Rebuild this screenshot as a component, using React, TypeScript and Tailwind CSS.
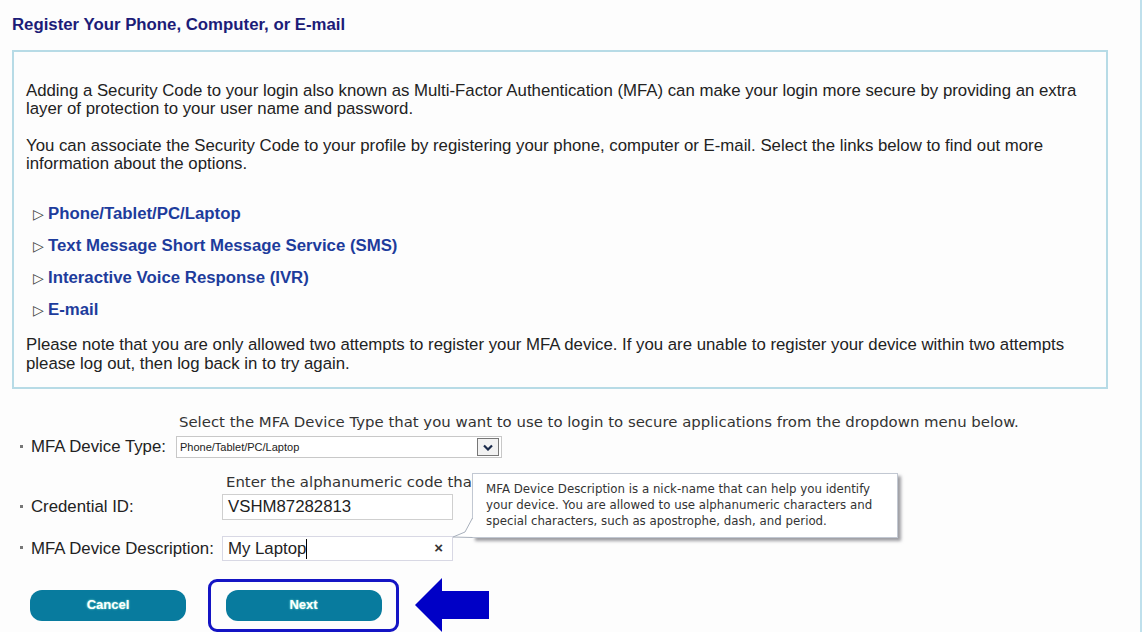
const links = [
  'Phone/Tablet/PC/Laptop',
  'Text Message Short Message Service (SMS)',
  'Interactive Voice Response (IVR)',
  'E-mail',
];

function Dot() {
  return <span className="inline-block w-[3px] h-[3px] bg-[#777] mr-[8px] ml-[8px] align-middle relative top-[-1px]" />;
}

export default function App() {
  return (
    <div className="w-[1147px] h-[632px] bg-white overflow-hidden font-['Liberation_Sans',Arial,sans-serif] text-[#222]">
      <div className="w-[1142px] h-[632px] border-r-2 border-[#bfe0ec] bg-[#fdfdfd] relative">
        <h1 className="pl-[12px] pt-[16px] text-[16.8px] leading-[18px] font-bold text-[#1c1c78]">
          Register Your Phone, Computer, or E-mail
        </h1>

        {/* info box */}
        <div className="ml-[12px] mt-[16px] w-[1096px] border-2 border-[#b7dbe6] pl-[12px] pr-[16px] pt-[30px] pb-[14px] text-[16.8px] leading-[18px]">
          <p>
            Adding a Security Code to your login also known as Multi-Factor Authentication (MFA) can make your login more secure by providing an extra layer of protection to your user name and password.
          </p>
          <p className="mt-[19px]">
            You can associate the Security Code to your profile by registering your phone, computer or E-mail. Select the links below to find out more information about the options.
          </p>
          <ul className="mt-[25px] pl-[7px]">
            {links.map((l) => (
              <li key={l} className="h-[32px] flex items-center">
                <span className="text-[14px] text-[#444] mr-[4px]">▷</span>
                <a className="font-bold text-[#1d3c9c]">{l}</a>
              </li>
            ))}
          </ul>
          <p className="mt-[9px] leading-[19px]">
            Please note that you are only allowed two attempts to register your MFA device. If you are unable to register your device within two attempts please log out, then log back in to try again.
          </p>
        </div>

        {/* form */}
        <div className="mt-[24px] text-[16.8px]">
          <p className="pl-[179px] font-['DejaVu_Sans',Verdana,sans-serif] text-[14.9px] leading-[18px] text-[#333]">
            Select the MFA Device Type that you want to use to login to secure applications from the dropdown menu below.
          </p>
          <div className="mt-[5px] flex items-center h-[22px] pl-[12px]">
            <Dot />
            <span className="w-[145px]">MFA Device Type:</span>
            <div className="w-[326px] h-[22px] border border-[#c8c8c8] bg-white flex items-center justify-between pl-[3px] pr-[2px]">
              <span className="text-[11px] text-[#222]">Phone/Tablet/PC/Laptop</span>
              <span className="w-[22px] h-[18px] border border-[#777] bg-[#f2f2f2] flex items-center justify-center">
                <svg width="10" height="7" viewBox="0 0 10 7">
                  <path d="M1 1.5 L5 5.5 L9 1.5" fill="none" stroke="#1a2a4a" strokeWidth="2.2" />
                </svg>
              </span>
            </div>
          </div>
          <p className="mt-[15px] pl-[226px] font-['DejaVu_Sans',Verdana,sans-serif] text-[14.9px] leading-[18px] text-[#333]">
            Enter the alphanumeric code that
          </p>
          <div className="mt-[3px] flex items-center h-[26px] pl-[12px]">
            <Dot />
            <span className="w-[191px]">Credential ID:</span>
            <div className="w-[231px] h-[26px] border border-[#cfcfcf] bg-white flex items-center pl-[5px]">
              VSHM87282813
            </div>
          </div>
          <div className="mt-[16px] flex items-center h-[25px] pl-[12px]">
            <Dot />
            <span className="w-[191px]">MFA Device Description:</span>
            <div className="w-[231px] h-[25px] border border-[#d8d8e4] bg-white flex items-center justify-between pl-[5px] pr-[9px]">
              <span className="flex items-center">
                My Laptop<span className="inline-block w-px h-[20px] bg-black" />
              </span>
              <span className="text-[15px] font-bold text-[#333]">×</span>
            </div>
          </div>

          {/* buttons */}
          <div className="mt-[17px] flex items-center pl-[30px]">
            <button className="w-[156px] h-[31px] rounded-[12px] bg-[#087b9e] text-white text-[13px] font-bold [text-shadow:0_0_2px_#9fd]">
              Cancel
            </button>
            <div className="ml-[22px] w-[191px] h-[53px] border-[3px] border-[#1414c4] rounded-[9px] flex items-center justify-center">
              <button className="w-[156px] h-[31px] rounded-[12px] bg-[#087b9e] text-white text-[13px] font-bold [text-shadow:0_0_2px_#9fd]">
                Next
              </button>
            </div>
            <svg className="ml-[16px]" width="75" height="54" viewBox="0 0 75 54">
              <path d="M0 27 L27 0 L27 13 L74 13 L74 41 L27 41 L27 54 Z" fill="#0000c6" />
            </svg>
          </div>
        </div>

        {/* tooltip */}
        <div className="absolute left-[472px] top-[473px] w-[426px] h-[65px] bg-white border border-[#c2c8d2] shadow-[3px_3px_3px_rgba(80,80,90,0.55)] pl-[13px] pr-[22px] pt-[7px] font-['DejaVu_Sans',Tahoma,sans-serif] text-[11.8px] leading-[16px] text-[#333]">
          MFA Device Description is a nick-name that can help you identify your device. You are allowed to use alphanumeric characters and special characters, such as apostrophe, dash, and period.
        </div>
        <svg className="absolute left-[452px] top-[516px]" width="22" height="24" viewBox="0 0 22 24">
          <path d="M21 2 L13 16 L1 21 L21 21 Z" fill="white" />
          <path d="M20.5 2 L13 16 L1 21 L20.5 21.5" fill="none" stroke="#a8b0bc" strokeWidth="1" />
        </svg>
      </div>
    </div>
  );
}
